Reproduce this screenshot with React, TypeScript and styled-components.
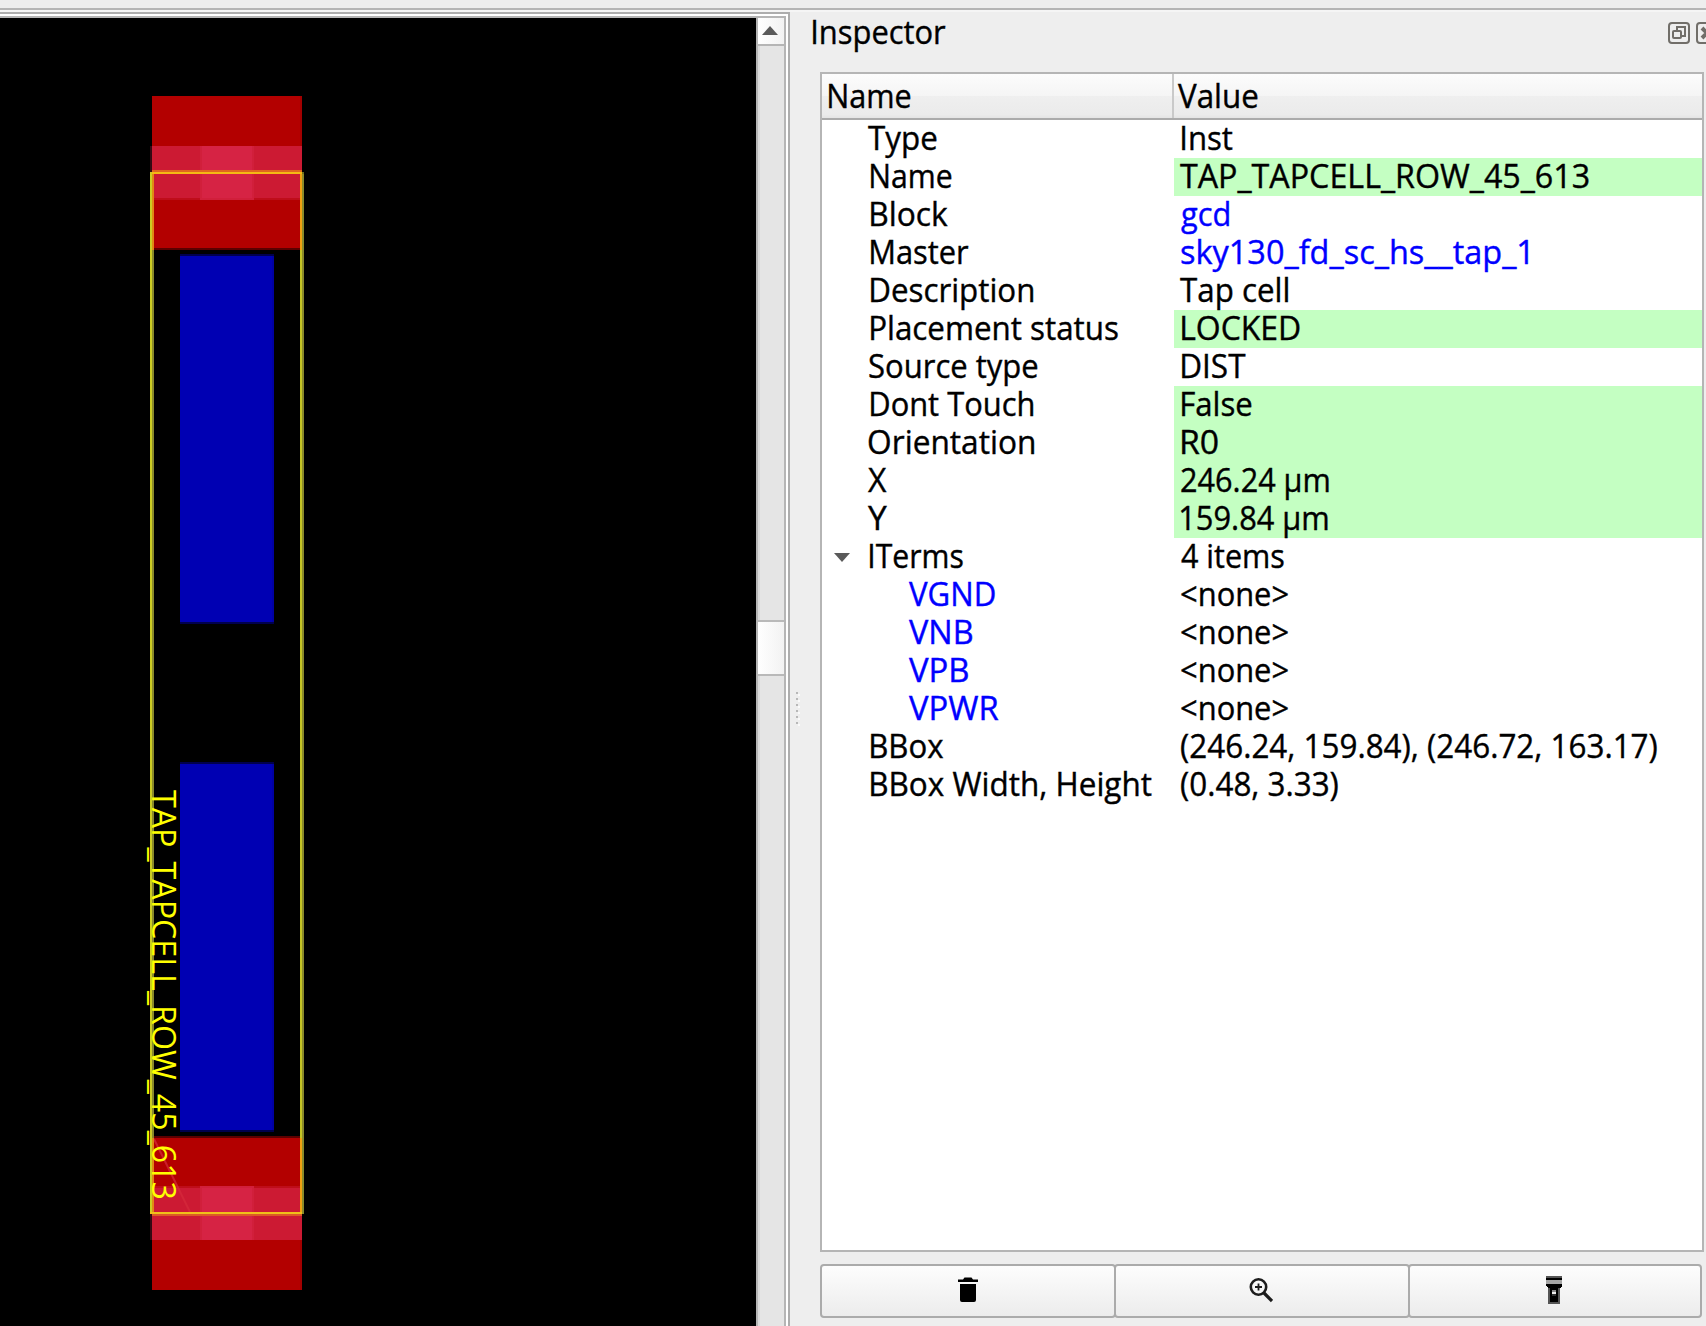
import React, { useLayoutEffect, useState } from "react";
import styled, { createGlobalStyle } from "styled-components";

const FONT = '"Open Sans", "Noto Sans", sans-serif';
const SIZE = 33.5;

const Global = createGlobalStyle`
  html, body { margin: 0; padding: 0; overflow: hidden; background: #eeeeee; }
  * { box-sizing: border-box; }
`;

const Window = styled.div`
  display: flex;
  flex-direction: column;
  width: 1706px;
  height: 1326px;
  overflow: hidden;
  background: #eeeeee;
  color: #000;
  font-family: ${FONT};
  font-size: ${SIZE}px;
`;

const ToolbarEdge = styled.div`
  flex: none;
  height: 12px;
  border-bottom: 2px solid #f5f5f5;
  box-shadow: inset 0 -2px 0 #b5b5b5;
`;

const Workspace = styled.div`
  display: flex;
  flex: 1;
  min-height: 0;
`;

const Viewer = styled.div`
  display: flex;
  width: 790px;
  border: solid #adadad;
  border-width: 2px 2px 0 0;
  background: #fff;
  padding: 2px 2px 0 0;
`;

const ViewerFrame = styled.div`
  display: flex;
  flex: 1;
  border: solid #b5b5b5;
  border-width: 2px 2px 0 0;
`;

const Canvas = styled.svg`
  display: block;
  flex: none;
  width: 756px;
  height: 1308px;
  background: #000;
`;

const ScrollBar = styled.div`
  display: flex;
  flex-direction: column;
  flex: 1;
  border-left: 2px solid #b5b5b5;
`;

const ScrollButton = styled.div`
  display: flex;
  align-items: center;
  justify-content: center;
  flex: none;
  height: 28px;
  padding: 0 2px 1px 0;
  border-bottom: 2px solid #b5b5b5;
  background: linear-gradient(90deg, #fff, #f2f2f2);
`;

const Track = styled.div<{ $h?: number }>`
  ${(p) => (p.$h ? `flex: none; height: ${p.$h}px;` : "flex: 1;")}
  background: #e5e5e5;
  box-shadow: inset 2px 0 0 #dadada;
`;

const Thumb = styled.div`
  flex: none;
  height: 56px;
  border: solid #b9b9b9;
  border-width: 2px 0;
  background: linear-gradient(90deg, #fff, #f2f2f2);
`;

const Splitter = styled.div`
  display: flex;
  flex-direction: column;
  gap: 4px;
  width: 30px;
  padding: 680px 0 0 6px;
`;

const Grip = styled.div`
  width: 2px;
  height: 2px;
  background: #b8b8b8;
  box-shadow: 2px 2px 0 #fafafa;
`;

const Dock = styled.div`
  display: flex;
  flex-direction: column;
  flex: 1;
  min-width: 0;
`;

const TitleBar = styled.div`
  display: flex;
  flex: none;
  height: 60px;
  margin-left: -8px;
`;

const Title = styled.div`
  flex: none;
  width: 856px;
  padding-top: 2px;
  height: 38px;
`;

const WindowIcons = styled.svg`
  flex: none;
  width: 44px;
  height: 24px;
  margin-top: 9px;
`;

const Tree = styled.div`
  display: flex;
  flex-direction: column;
  flex: none;
  width: 884px;
  height: 1180px;
  border: 2px solid #b5b5b5;
  background: #fff;
`;

const HeaderRow = styled.div`
  display: flex;
  flex: none;
  height: 46px;
  border-bottom: 2px solid #ababab;
  background: linear-gradient(#fcfcfc 0%, #f5f5f5 49%, #efefef 50%, #ebebeb 92%, #e4e4e4 100%);
`;

const HeaderCell = styled.div<{ $first?: boolean }>`
  padding: 4px 0 0 ${(p) => (p.$first ? 5 : 4)}px;
  ${(p) => (p.$first ? "width: 352px; border-right: 2px solid #c9c9c9;" : "flex: 1;")}
`;

const Row = styled.div`
  display: flex;
  flex: none;
  height: 38px;
`;

const NameCell = styled.div<{ $child?: boolean; $link?: boolean }>`
  display: flex;
  flex: none;
  width: 352px;
  padding-left: ${(p) => (p.$child ? 86 : 12)}px;
  color: ${(p) => (p.$link ? "#0000ff" : "#000")};
`;

const Expander = styled.div`
  display: flex;
  align-items: center;
  width: 34px;
`;

const ValueCell = styled.div<{ $editable?: boolean; $link?: boolean }>`
  flex: 1;
  padding-left: 6px;
  background: ${(p) => (p.$editable ? "#c4ffc2" : "transparent")};
  color: ${(p) => (p.$link ? "#0000ff" : "#000")};
`;

const Actions = styled.div`
  display: flex;
  flex: none;
  width: 882px;
  height: 54px;
  margin-top: 12px;
`;

const ActionButton = styled.button<{ $w: number }>`
  display: flex;
  align-items: center;
  justify-content: center;
  flex: none;
  width: ${(p) => p.$w}px;
  height: 54px;
  margin: 0 -2px 0 0;
  padding: 0 2px 2px 0;
  border: 2px solid #ababab;
  border-radius: 4px;
  background: linear-gradient(#fdfdfd, #ececec);
`;

const Fitted = styled.span`
  display: block;
  width: max-content;
  line-height: 38px;
  white-space: pre;
  transform-origin: 0 0;
  -webkit-text-stroke: 0.4px currentColor;
`;

/* Sets a label so that its glyphs start at the cell's edge and span `w` pixels. */
function Label({ text, w, dx = 0 }: { text: string; w: number; dx?: number }) {
  const [transform, setTransform] = useState("none");
  useLayoutEffect(() => {
    const ctx = document.createElement("canvas").getContext("2d");
    if (!ctx) return;
    ctx.font = `${SIZE}px ${FONT}`;
    const m = ctx.measureText(text);
    const s = w / (m.actualBoundingBoxLeft + m.actualBoundingBoxRight);
    setTransform(`translate(${dx + m.actualBoundingBoxLeft * s}px, -2px) scaleX(${s})`);
  }, [text, w, dx]);
  return <Fitted style={{ transform }}>{text}</Fitted>;
}

const bearing = (text: string) => (/^[BDFHILMNPR]/.test(text) ? 2 : /^[TXY]/.test(text) ? 0 : 1);

type Item = {
  name: string;
  nw: number;
  value: string;
  vw: number;
  editable?: boolean;
  link?: boolean;
  child?: boolean;
  open?: boolean;
};

const items: Item[] = [
  { name: "Type", nw: 69, value: "Inst", vw: 51 },
  { name: "Name", nw: 81, value: "TAP_TAPCELL_ROW_45_613", vw: 409, editable: true },
  { name: "Block", nw: 77, value: "gcd", vw: 48, link: true },
  { name: "Master", nw: 98, value: "sky130_fd_sc_hs__tap_1", vw: 347, link: true },
  { name: "Description", nw: 162, value: "Tap cell", vw: 108 },
  { name: "Placement status", nw: 247, value: "LOCKED", vw: 118, editable: true },
  { name: "Source type", nw: 169, value: "DIST", vw: 64 },
  { name: "Dont Touch", nw: 162, value: "False", vw: 70, editable: true },
  { name: "Orientation", nw: 165, value: "R0", vw: 36, editable: true },
  { name: "X", nw: 19, value: "246.24 µm", vw: 148, editable: true },
  { name: "Y", nw: 19, value: "159.84 µm", vw: 147, editable: true },
  { name: "ITerms", nw: 93, value: "4 items", vw: 103, open: true },
  { name: "VGND", nw: 86, value: "<none>", vw: 107, child: true },
  { name: "VNB", nw: 63, value: "<none>", vw: 107, child: true },
  { name: "VPB", nw: 59, value: "<none>", vw: 107, child: true },
  { name: "VPWR", nw: 90, value: "<none>", vw: 107, child: true },
  { name: "BBox", nw: 72, value: "(246.24, 159.84), (246.72, 163.17)", vw: 476 },
  { name: "BBox Width, Height", nw: 281, value: "(0.48, 3.33)", vw: 157 },
];

function LayoutView() {
  return (
    <Canvas viewBox="0 18 756 1308">
      <g shapeRendering="crispEdges">
        <rect x="152" y="96" width="150" height="152" fill="#b30000" />
        <rect x="152" y="248" width="150" height="2" fill="#5c0000" />
        <rect x="152" y="146" width="150" height="52" fill="#cc1a33" />
        <rect x="152" y="198" width="150" height="2" fill="#bf0d1a" />
        <rect x="150" y="146" width="2" height="26" fill="#330a14" />
        <rect x="200" y="146" width="54" height="54" fill="#d11f3b" />
        <rect x="202" y="146" width="50" height="52" fill="#d62344" />
        <rect x="300" y="96" width="2" height="50" fill="#a30000" />

        <rect x="152" y="1136" width="150" height="2" fill="#5c0000" />
        <rect x="152" y="1138" width="150" height="152" fill="#b30000" />
        <rect x="152" y="1186" width="150" height="2" fill="#bf0d1a" />
        <rect x="152" y="1188" width="150" height="52" fill="#cc1a33" />
        <rect x="150" y="1214" width="2" height="26" fill="#330a14" />
        <rect x="200" y="1186" width="54" height="54" fill="#d11f3b" />
        <rect x="202" y="1188" width="50" height="52" fill="#d62344" />
        <rect x="300" y="1240" width="2" height="50" fill="#a30000" />

        <rect x="180" y="254" width="94" height="370" fill="#00004d" />
        <rect x="180" y="256" width="92" height="366" fill="#0000b3" />
        <rect x="272" y="256" width="2" height="366" fill="#0000a3" />
        <rect x="180" y="762" width="94" height="370" fill="#00004d" />
        <rect x="180" y="764" width="92" height="366" fill="#0000b3" />
        <rect x="272" y="764" width="2" height="366" fill="#0000a3" />
      </g>
      <path d="M154 1139L190 1212" stroke="#d62b3c" strokeWidth="2" opacity="0.7" />
      <g shapeRendering="crispEdges">
        <rect x="152" y="170" width="150" height="2" fill="#e0661f" />
        <rect x="150" y="172" width="152" height="2" fill="#f5b914" />
        <rect x="302" y="172" width="2" height="2" fill="#70701a" />
        <rect x="150" y="172" width="2" height="1042" fill="#cccc22" />
        <rect x="152" y="174" width="2" height="1038" fill="#8a8a2a" />
        <rect x="300" y="174" width="2" height="1038" fill="#c4c424" />
        <rect x="302" y="174" width="2" height="1040" fill="#8a8a2a" />
        <rect x="152" y="174" width="2" height="76" fill="#e08a14" />
        <rect x="300" y="174" width="2" height="76" fill="#f0a010" />
        <rect x="152" y="1138" width="2" height="74" fill="#e08a14" />
        <rect x="300" y="1138" width="2" height="74" fill="#f0a010" />
        <rect x="150" y="1212" width="152" height="2" fill="#f0c01a" />
        <rect x="152" y="1214" width="150" height="2" fill="#dc5a26" />
      </g>
      <text
        transform="translate(152 790) rotate(90)"
        fill="#ffff00"
        fontFamily={FONT}
        fontSize="33.5"
        textLength="410"
        lengthAdjust="spacingAndGlyphs"
      >
        TAP_TAPCELL_ROW_45_613
      </text>
    </Canvas>
  );
}

export default function App() {
  return (
    <Window>
      <Global />
      <ToolbarEdge />
      <Workspace>
        <Viewer>
          <ViewerFrame>
            <LayoutView />
            <ScrollBar>
              <ScrollButton>
                <svg width="16" height="9" viewBox="0 0 16 9">
                  <path d="M0 9L8 0L16 9Z" fill="#5a5a5a" />
                </svg>
              </ScrollButton>
              <Track $h={574} />
              <Thumb />
              <Track />
            </ScrollBar>
          </ViewerFrame>
        </Viewer>
        <Splitter>
          {[0, 1, 2, 3, 4, 5].map((i) => (
            <Grip key={i} />
          ))}
        </Splitter>
        <Dock>
          <TitleBar>
            <Title>
              <Label text="Inspector" w={133} dx={1} />
            </Title>
            <WindowIcons viewBox="0 0 44 24" fill="none" stroke="#716e69" strokeWidth="2">
              <rect x="1" y="2" width="20" height="20" rx="3" />
              <path d="M9 9V6h8v9h-3" />
              <rect x="5" y="10" width="8" height="7" rx="1" />
              <rect x="29" y="2" width="20" height="20" rx="3" />
              <path d="M34 7l10 10M34 17l10-10" strokeWidth="4" />
            </WindowIcons>
          </TitleBar>
          <Tree>
            <HeaderRow>
              <HeaderCell $first>
                <Label text="Name" w={82} dx={2} />
              </HeaderCell>
              <HeaderCell>
                <Label text="Value" w={80} />
              </HeaderCell>
            </HeaderRow>
            {items.map((it) => (
              <Row key={it.name}>
                <NameCell $child={it.child} $link={it.child}>
                  {!it.child && (
                    <Expander>
                      {it.open && (
                        <svg width="16" height="9" viewBox="0 0 16 9">
                          <path d="M0 0H16L8 9Z" fill="#5a5a5a" />
                        </svg>
                      )}
                    </Expander>
                  )}
                  <Label text={it.name} w={it.nw} dx={bearing(it.name) + (/^[BDMNP]/.test(it.name) ? 1 : 0)} />
                </NameCell>
                <ValueCell $editable={it.editable} $link={it.link}>
                  <Label text={it.value} w={it.vw} dx={bearing(it.value)} />
                </ValueCell>
              </Row>
            ))}
          </Tree>
          <Actions>
            <ActionButton $w={296}>
              <svg width="22" height="28" viewBox="-2 0 22 28">
                <path d="M0 3.5H5L6.5 1.5H13.5L15 3.5H20V6H0ZM2 8H18V24Q18 26 16 26H4Q2 26 2 24Z" fill="#000" />
              </svg>
            </ActionButton>
            <ActionButton $w={296}>
              <svg width="24" height="26" viewBox="0 0 24 26" fill="none" stroke="#1c1c1c">
                <circle cx="9.5" cy="10" r="7.7" strokeWidth="2.6" />
                <path d="M15 16L23 24" strokeWidth="3.2" />
                <path d="M9.5 6.5V13.5M6 10H13" strokeWidth="1.8" />
              </svg>
            </ActionButton>
            <ActionButton $w={294}>
              <svg width="16" height="28" viewBox="0 0 16 28" shapeRendering="crispEdges">
                <rect width="16" height="2" fill="#555" />
                <rect y="2" width="16" height="2" fill="#000" />
                <rect y="4" width="16" height="4" fill="#a5a5a5" />
                <path d="M0 8H16V10L14 12V28H2V12L0 10Z" fill="#000" />
                <path d="M2 12h2v16h-2zM12 12h2v16h-2zM4 26h8v2h-8z" fill="#555" />
                <rect x="6" y="14" width="4" height="2" fill="#888" />
                <rect x="6" y="16" width="4" height="2" fill="#eee" />
                <rect x="6" y="18" width="4" height="2" fill="#333" />
              </svg>
            </ActionButton>
          </Actions>
        </Dock>
      </Workspace>
    </Window>
  );
}
